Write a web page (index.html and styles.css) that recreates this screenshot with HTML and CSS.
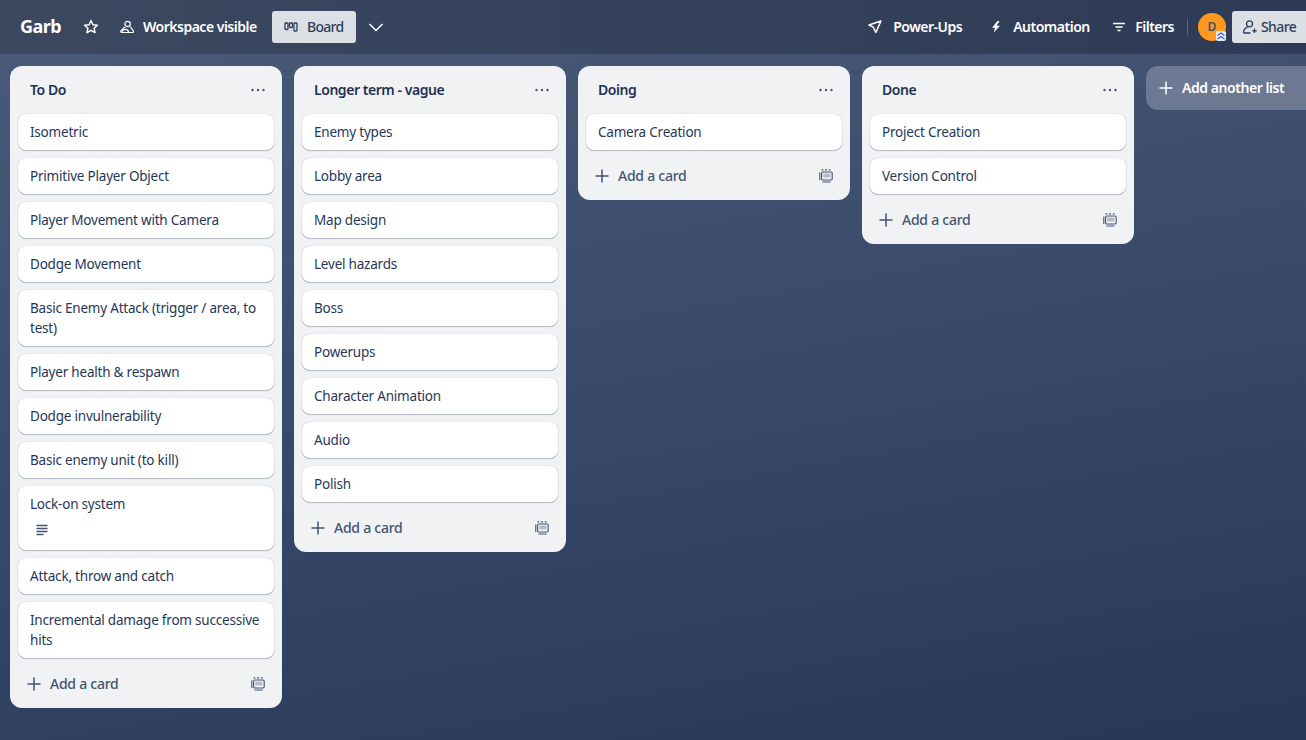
FILE: index.html
```html
<!DOCTYPE html>
<html lang="en">
<head>
  <meta charset="UTF-8" />
  <meta name="viewport" content="width=device-width, initial-scale=1.0" />
  <title>Garb</title>
  <link rel="stylesheet" href="styles.css">
</head>
<body>
  <svg class="sprites" width="0" height="0" aria-hidden="true">
    <symbol id="plus" viewBox="0 0 16 16"><path d="M8 1.5v13M1.5 8h13" fill="none" stroke="currentColor" stroke-width="1.5"/></symbol>
    <symbol id="dots" viewBox="0 0 16 16"><circle cx="2.5" cy="8" r="1.2" fill="currentColor"/><circle cx="8" cy="8" r="1.2" fill="currentColor"/><circle cx="13.5" cy="8" r="1.2" fill="currentColor"/></symbol>
    <symbol id="template" viewBox="0 0 14 14"><g fill="none" stroke="currentColor" stroke-width="1.1"><rect x="2.600" y="3" width="10.600" height="8" rx="1.200"/><path d="M.8 3.500v7.500M3.500 13h8M2.500 .9h1.800M6 .9h2M9.800 .9h1.800"/></g><rect x="4.300" y="4.600" width="7.200" height="3.800" fill="currentColor" opacity=".35"/></symbol>
  </svg>

  <header class="topbar">
    <div class="topbar-left">
      <h1 class="board-name">Garb</h1>
      <button class="nav-btn star-btn">
        <svg width="16" height="16" viewBox="0 0 16 16"><path d="M8 1.600l1.900 4.100 4.500.5-3.300 3 .9 4.400L8 11.400l-4 2.200.9-4.400-3.300-3 4.500-.5z" fill="none" stroke="currentColor" stroke-width="1.500" stroke-linejoin="round"/></svg>
      </button>
      <button class="nav-btn workspace-btn">
        <svg width="16" height="16" viewBox="0 0 16 16"><g fill="none" stroke="currentColor" stroke-width="1.200" stroke-linejoin="round"><circle cx="8.600" cy="5" r="2.700"/><path d="M6.300 7.800L2 11.600c-.6.8-.3 1.900.8 1.900h10.600c1 0 1.300-.9.900-1.700l-2.900-4"/><path d="M3 13.500c0-2 1.600-3.200 3.500-3.200s3 1.200 3.200 3.200"/></g></svg>
        <span class="btn-label">Workspace visible</span>
      </button>
      <button class="board-btn">
        <svg width="14" height="14" viewBox="0 0 14 14"><g fill="none" stroke="currentColor" stroke-width="1.300"><rect x="1" y="3" width="3" height="6.500" rx=".8"/><rect x="5.500" y="3" width="3" height="4.500" rx=".8"/><rect x="10" y="3" width="3" height="8" rx=".8"/></g></svg>
        <span class="btn-label">Board</span>
      </button>
      <button class="nav-btn chevron-btn">
        <svg width="16" height="16" viewBox="0 0 16 16"><path d="M1.500 5l6.500 6.500L14.500 5" fill="none" stroke="currentColor" stroke-width="1.500"/></svg>
      </button>
    </div>
    <div class="topbar-right">
      <button class="nav-btn powerups-btn">
        <svg width="14" height="14" viewBox="0 0 14 14"><path d="M13 1L1 5l4.300 2.200L7.800 12.500z" fill="none" stroke="currentColor" stroke-width="1.500" stroke-linejoin="round"/></svg>
        <span class="btn-label">Power-Ups</span>
      </button>
      <button class="nav-btn automation-btn">
        <svg width="10" height="14" viewBox="0 0 10 14"><path d="M6.500 1L1 7.800h3L2.800 12.500 9 5.800H5.600L8.500 1z" fill="currentColor"/></svg>
        <span class="btn-label">Automation</span>
      </button>
      <button class="nav-btn filters-btn">
        <svg width="12" height="12" viewBox="0 0 12 12"><path d="M0 2.500h12M2.500 6h7M4.500 9.500h3" stroke="currentColor" stroke-width="1.300"/></svg>
        <span class="btn-label">Filters</span>
      </button>
      <span class="divider"></span>
      <div class="avatar"><span class="btn-label">D</span>
        <span class="avatar-badge">
          <svg width="10" height="10" viewBox="0 0 10 10"><path d="M1.500 4.500L5 2l3.500 2.500M1.500 8L5 5.500 8.500 8" fill="none" stroke="#3d5bd0" stroke-width="1.200"/></svg>
        </span>
      </div>
      <button class="share-btn">
        <svg width="16" height="16" viewBox="0 0 16 16"><g fill="none" stroke="currentColor" stroke-width="1.300"><circle cx="7.500" cy="4.800" r="3"/><path d="M1.500 14c0-3 1.800-5 4-5.800M1.500 14h7"/><path d="M12.500 9.500v4.500M10.300 11.800h4.400"/></g></svg>
        <span class="btn-label">Share</span>
      </button>
    </div>
  </header>

  <main class="board">
    <section class="list">
      <div class="list-head"><h2>To Do</h2><svg class="list-menu"><use href="#dots"/></svg></div>
      <div class="card">Isometric</div>
      <div class="card">Primitive Player Object</div>
      <div class="card">Player Movement with Camera</div>
      <div class="card">Dodge Movement</div>
      <div class="card">Basic Enemy Attack (trigger / area, to test)</div>
      <div class="card">Player health &amp; respawn</div>
      <div class="card">Dodge invulnerability</div>
      <div class="card">Basic enemy unit (to kill)</div>
      <div class="card">Lock-on system
        <div class="card-badges">
          <svg width="16" height="16" viewBox="0 0 16 16"><path d="M2.500 3.500h11M2.500 6.500h11M2.500 9.500h11M2.500 12.500h7" stroke="currentColor" stroke-width="1.400"/></svg>
        </div>
      </div>
      <div class="card">Attack, throw and catch</div>
      <div class="card">Incremental damage from successive hits</div>
      <div class="list-foot"><svg class="foot-plus"><use href="#plus"/></svg><span class="foot-label">Add a card</span><svg class="foot-template"><use href="#template"/></svg></div>
    </section>

    <section class="list">
      <div class="list-head"><h2>Longer term - vague</h2><svg class="list-menu"><use href="#dots"/></svg></div>
      <div class="card">Enemy types</div>
      <div class="card">Lobby area</div>
      <div class="card">Map design</div>
      <div class="card">Level hazards</div>
      <div class="card">Boss</div>
      <div class="card">Powerups</div>
      <div class="card">Character Animation</div>
      <div class="card">Audio</div>
      <div class="card">Polish</div>
      <div class="list-foot"><svg class="foot-plus"><use href="#plus"/></svg><span class="foot-label">Add a card</span><svg class="foot-template"><use href="#template"/></svg></div>
    </section>

    <section class="list">
      <div class="list-head"><h2>Doing</h2><svg class="list-menu"><use href="#dots"/></svg></div>
      <div class="card">Camera Creation</div>
      <div class="list-foot"><svg class="foot-plus"><use href="#plus"/></svg><span class="foot-label">Add a card</span><svg class="foot-template"><use href="#template"/></svg></div>
    </section>

    <section class="list">
      <div class="list-head"><h2>Done</h2><svg class="list-menu"><use href="#dots"/></svg></div>
      <div class="card">Project Creation</div>
      <div class="card">Version Control</div>
      <div class="list-foot"><svg class="foot-plus"><use href="#plus"/></svg><span class="foot-label">Add a card</span><svg class="foot-template"><use href="#template"/></svg></div>
    </section>

    <button class="add-list"><svg class="add-plus"><use href="#plus"/></svg><span class="foot-label">Add another list</span></button>
  </main>
</body>
</html>
```

FILE: styles.css
```css
* { box-sizing: border-box; }
html, body { height: 100%; }
body { margin: 0; height: 740px; overflow: hidden; font-family: "Noto Sans", "Open Sans", sans-serif; font-size: 14px; color: #172b4d; background: linear-gradient(170deg, #4b5b79 0%, #3d4d6e 40%, #273757 100%); }
button { font: inherit; border: none; background: none; padding: 0; cursor: pointer; }
.sprites { position: absolute; }

.topbar { height: 54px; display: flex; justify-content: space-between; align-items: center; padding-left: 20px; background: linear-gradient(90deg, #3b4860, #2f3b56); color: #fff; }
.topbar-left, .topbar-right { display: flex; align-items: center; }
.board-name { margin: 0 0 2px; font-size: 18px; font-weight: 700; line-height: 24px; width: 63px; letter-spacing: -0.5px; }
.btn-label { margin-bottom: 2px; }
.nav-btn { display: flex; align-items: center; color: #fff; font-size: 14px; font-weight: 600; height: 32px; letter-spacing: -0.5px; white-space: nowrap; }
.star-btn { width: 36px; }
.workspace-btn { gap: 8px; width: 153px; }
.board-btn { display: flex; align-items: center; gap: 9px; width: 84px; height: 32px; padding-left: 12px; background: #dcdfe4; color: #2c3e5d; border-radius: 3px; font-weight: 500; letter-spacing: -0.7px; }
.chevron-btn { margin-left: 12px; }

.powerups-btn { gap: 11px; width: 123px; }
.automation-btn { gap: 12px; width: 122px; }
.filters-btn { gap: 10px; }
.divider { width: 1px; height: 16px; background: #5a6679; margin: 0 10px 0 13px; }
.avatar { position: relative; width: 28px; height: 28px; border-radius: 50%; background: #ff991f; color: #42526e; font-size: 12px; font-weight: 600; display: flex; align-items: center; justify-content: center; margin-right: 6px; }
.avatar-badge { position: absolute; right: 0; bottom: 0; width: 10px; height: 10px; background: #e9ecf5; border-radius: 2px; display: flex; }
.share-btn { display: flex; align-items: center; gap: 3px; width: 74px; height: 32px; padding-left: 10px; background: #dcdfe4; color: #2c3e5d; border-radius: 3px 0 0 3px; font-weight: 500; letter-spacing: -0.6px; }

.board { display: flex; align-items: flex-start; gap: 12px; padding: 12px 0 0 10px; height: 686px; overflow: hidden; }
.list { flex: none; width: 272px; padding: 0 8px 6px; background: #f1f2f4; border-radius: 12px; }
.list-head { display: flex; justify-content: space-between; align-items: center; height: 48px; padding: 0 8px 0 12px; }
.list-head h2 { margin: 0; font-size: 14px; line-height: 20px; font-weight: 600; color: #1f3256; letter-spacing: -0.45px; }
.list-menu { width: 16px; height: 16px; color: #44546f; }
.card { margin-bottom: 8px; padding: 8px 12px; background: #fff; border-radius: 8px; box-shadow: 0 1px 1px #091e4240, 0 0 1px #091e424f; font-size: 13.5px; line-height: 20px; color: #26375a; letter-spacing: -0.21px; }
.card-badges { display: flex; height: 28px; padding: 8px 3px 0 4px; color: #44546f; }
.list-foot { display: flex; align-items: center; height: 36px; padding-left: 8px; color: #44546f; font-weight: 500; letter-spacing: -0.25px; }
.foot-label { margin-bottom: 2px; }
.foot-plus { width: 16px; height: 16px; margin-right: 8px; }
.foot-template { width: 14px; height: 14px; margin-left: auto; margin-right: 9px; }
.add-list { flex: none; display: flex; align-items: center; width: 272px; height: 44px; padding-left: 12px; background: #ffffff3d; color: #fff; border-radius: 12px; font-weight: 600; letter-spacing: -0.45px; }
.add-plus { width: 16px; height: 16px; margin-right: 8px; }
```
